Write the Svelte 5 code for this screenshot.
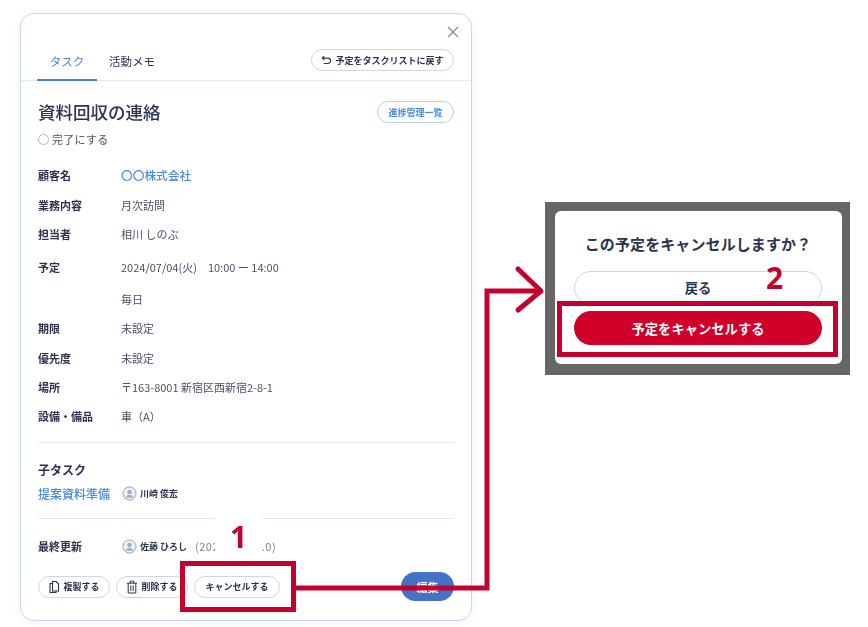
<script>
  const rows = [
    { label: '顧客名', value: '〇〇株式会社', link: true, h: 30 },
    { label: '業務内容', value: '月次訪問', h: 29 },
    { label: '担当者', value: '相川 しのぶ', h: 33 },
    { label: '予定', value: '2024/07/04(火)　10:00 ー 14:00', h: 32 },
    { label: '', value: '毎日', h: 29 },
    { label: '期限', value: '未設定', h: 30 },
    { label: '優先度', value: '未設定', h: 29 },
    { label: '場所', value: '〒163-8001 新宿区西新宿2-8-1', h: 29 },
    { label: '設備・備品', value: '車（A）', h: 29 }
  ];
</script>

{#snippet avatar()}
  <svg class="avatar" viewBox="0 0 16 16" width="15" height="15">
    <circle cx="8" cy="8" r="7" fill="#eef2f7" stroke="#8fa1b8" stroke-width="1" />
    <circle cx="8" cy="6.3" r="2.4" fill="#9fb0c6" />
    <path d="M3.8 12.6c.7-2.2 2.3-3.2 4.2-3.2s3.5 1 4.2 3.2" fill="#9fb0c6" />
  </svg>
{/snippet}

<main>
  <section class="card">
    <svg class="close" viewBox="0 0 12 12" width="12" height="12">
      <path d="M1 1l10 10M11 1L1 11" stroke="#8a8f96" stroke-width="1.4" fill="none" />
    </svg>

    <header class="tabs">
      <span class="tab active">タスク</span>
      <span class="tab">活動メモ</span>
      <button class="pill back">
        <svg viewBox="0 0 12 12" width="11" height="11">
          <path d="M3.6 1.2L1.3 3.4l2.3 2.2M1.6 3.4h5.9a2.9 2.9 0 0 1 0 5.900H3" stroke="#2b3350" stroke-width="1.2" fill="none" />
        </svg>
        予定をタスクリストに戻す
      </button>
    </header>

    <div class="body">
      <div class="title-row">
        <h1>資料回収の連絡</h1>
        <button class="pill progress">進捗管理一覧</button>
      </div>
      <div class="done"><span class="radio"></span>完了にする</div>

      <dl class="details">
        {#each rows as row}
          <div class="row" style="height:{row.h}px">
            <dt>{row.label}</dt>
            <dd class:link={row.link}>{row.value}</dd>
          </div>
        {/each}
      </dl>

      <hr />

      <h2>子タスク</h2>
      <div class="child">
        <span class="child-name">提案資料準備</span>
        {@render avatar()}
        <span class="person">川崎 俊宏</span>
      </div>

      <hr class="second" />

      <div class="updated">
        <span class="updated-label">最終更新</span>
        {@render avatar()}
        <span class="person">佐藤 ひろし</span>
        <span class="stamp">(2024/07/10.0)</span>
      </div>

      <footer class="actions">
        <button class="pill act">
          <svg viewBox="0 0 12 14" width="12" height="14">
            <path d="M4.500 1.500h3.600L10.500 4v7H4.500zM4.500 3.500H2v9h6V11" stroke="#2b3350" stroke-width="1.1" fill="none" />
          </svg>
          複製する
        </button>
        <button class="pill act">
          <svg viewBox="0 0 12 14" width="12" height="14">
            <path d="M1 3.200h10M4.200 3.200V1.200h3.600v2M2.200 3.200V13h7.600V3.200M4.800 5.500v5.500M7.200 5.500v5.500" stroke="#2b3350" stroke-width="1" fill="none" />
          </svg>
          削除する
        </button>
        <button class="pill act cancel">キャンセルする</button>
        <button class="edit">編集</button>
      </footer>
    </div>
  </section>

  <section class="dialog">
    <div class="sheet">
      <p>この予定をキャンセルしますか？</p>
      <button class="dlg-back">戻る</button>
      <button class="dlg-cancel">予定をキャンセルする</button>
    </div>
  </section>

  <!-- 注釈 -->
  <div class="patch"></div>
  <span class="num one">1</span>
  <span class="num two">2</span>
  <div class="box box-one"></div>
  <div class="box box-two"></div>
  <svg class="arrow" viewBox="0 0 868 627" width="868" height="627">
    <path d="M295 588H487V291H540" fill="none" stroke="#c4002f" stroke-width="5" />
    <path d="M518 269L541 291L518 310" fill="none" stroke="#c4002f" stroke-width="5" stroke-linecap="round" stroke-linejoin="round" />
  </svg>
</main>

<style>
  :global(body) {
    margin: 0;
    background: #fff;
    font-family: "Noto Sans CJK JP", "Noto Sans", sans-serif;
    color: #2b3350;
  }

  main {
    position: relative;
    width: 868px;
    height: 627px;
    overflow: hidden;
    display: flex;
    align-items: flex-start;
    filter: blur(0.35px);
  }

  button {
    font-family: inherit;
    cursor: pointer;
  }

  .card {
    position: relative;
    box-sizing: border-box;
    width: 452px;
    height: 608px;
    margin: 13px 0 0 20px;
    flex: none;
    background: #fff;
    border: 1px solid #c8d8ea;
    border-radius: 14px;
    box-shadow: 0 2px 8px rgba(60, 90, 130, 0.08);
  }

  .close {
    position: absolute;
    top: 12px;
    right: 12px;
  }

  .tabs {
    display: flex;
    align-items: flex-end;
    height: 66px;
    padding: 0 17px 0 16px;
    border-bottom: 1px solid #e4eaf1;
  }

  .tab {
    box-sizing: border-box;
    height: 38px;
    padding-top: 9px;
    font-size: 11.500px;
    line-height: 18px;
    text-align: center;
    margin-bottom: -1px;
  }

  .tab.active {
    width: 60px;
    color: #4a7fd0;
    border-bottom: 2px solid #4a7fd0;
    margin-right: 12px;
  }

  .pill {
    display: inline-flex;
    align-items: center;
    justify-content: center;
    gap: 3px;
    box-sizing: border-box;
    height: 22px;
    padding: 0;
    background: #fff;
    border: 1px solid #ccd8e6;
    border-radius: 11px;
    color: #2b3350;
    font-size: 9px;
    font-weight: 700;
    white-space: nowrap;
  }

  .back {
    width: 143px;
    margin: 0 0 9px auto;
  }

  .body {
    padding: 0 17px;
  }

  .title-row {
    display: flex;
    align-items: center;
    justify-content: space-between;
    height: 22px;
    margin-top: 20px;
  }

  h1 {
    margin: 0;
    font-size: 17.500px;
    font-weight: 500;
    line-height: 22px;
  }

  .progress {
    width: 77px;
    color: #4a8ae0;
    border-color: #b5d3f5;
    font-size: 9px;
  }

  .done {
    display: flex;
    align-items: center;
    gap: 3px;
    height: 18px;
    margin-top: 7px;
    font-size: 11px;
    letter-spacing: 0.3px;
    color: #4a5268;
  }

  .radio {
    box-sizing: border-box;
    width: 11px;
    height: 11px;
    border: 1.500px solid #a9bad0;
    border-radius: 50%;
  }

  .details {
    margin: 18px 0 0;
  }

  .row {
    display: grid;
    grid-template-columns: 83px 1fr;
    font-size: 11px;
    line-height: 18px;
  }

  dt {
    font-weight: 700;
    color: #2b3350;
  }

  dd {
    margin: 0;
    color: #4a5268;
  }

  dd.link {
    color: #4a8ae0;
    font-size: 11.700px;
    font-weight: 500;
  }

  hr {
    border: 0;
    border-top: 1px solid #e3e9f0;
    margin: 6px 0 0;
  }

  h2 {
    margin: 18px 0 0;
    font-size: 12px;
    line-height: 18px;
    font-weight: 700;
  }

  .child {
    display: flex;
    align-items: center;
    height: 18px;
    margin-top: 5px;
  }

  .child-name {
    width: 84px;
    color: #4a8ae0;
    font-size: 12px;
    font-weight: 500;
  }

  .person {
    margin-left: 3px;
    font-size: 9px;
    font-weight: 700;
  }

  .second {
    margin-top: 16px;
  }

  .updated {
    display: flex;
    align-items: center;
    height: 18px;
    margin-top: 18px;
  }

  .updated-label {
    width: 84px;
    font-size: 11px;
    font-weight: 700;
  }

  .stamp {
    margin-left: 8px;
    font-size: 11px;
    letter-spacing: 0.5px;
    color: #7a8296;
  }

  .actions {
    display: flex;
    align-items: center;
    gap: 6px;
    height: 29px;
    margin-top: 17px;
  }

  .act {
    width: 72px;
  }

  .cancel {
    width: 86px;
  }

  .edit {
    width: 53px;
    height: 29px;
    margin-left: auto;
    padding: 0;
    border: 0;
    border-radius: 15px;
    background: #4472c4;
    color: #fff;
    font-size: 11px;
    font-weight: 700;
  }

  .dialog {
    box-sizing: border-box;
    flex: none;
    width: 305px;
    height: 173px;
    margin: 202px 0 0 73px;
    padding: 9px 8px 11px 10px;
    background: #666;
  }

  .sheet {
    height: 153px;
    box-sizing: border-box;
    padding: 0 20px 0 19px;
    background: #fff;
    border-radius: 6px;
    text-align: center;
  }

  .sheet p {
    margin: 0;
    padding-top: 22px;
    height: 60px;
    box-sizing: border-box;
    font-size: 15px;
    line-height: 22px;
    letter-spacing: 0.1px;
    font-weight: 700;
    color: #2b3350;
  }

  .dlg-back,
  .dlg-cancel {
    display: block;
    width: 248px;
    height: 34px;
    padding: 0;
    border-radius: 17px;
    font-size: 13.300px;
    font-weight: 700;
  }

  .dlg-back {
    background: #fff;
    border: 1px solid #ccd8e6;
    color: #2b3350;
    padding-bottom: 2px;
  }

  .dlg-cancel {
    margin-top: 6px;
    border: 0;
    background: #d0002a;
    color: #fff;
  }

  .patch {
    position: absolute;
    left: 215px;
    top: 508px;
    width: 47px;
    height: 52px;
    background: #fff;
  }

  .num {
    position: absolute;
    font-family: "Open Sans", "Noto Sans", sans-serif;
    font-weight: 700;
    font-size: 30px;
    line-height: 30px;
    color: #c4002f;
  }

  .one {
    left: 230px;
    top: 522px;
  }

  .two {
    left: 766px;
    top: 263px;
  }

  .box {
    position: absolute;
    box-sizing: border-box;
    border: 5px solid #c4002f;
  }

  .box-one {
    left: 180px;
    top: 561px;
    width: 116px;
    height: 51px;
  }

  .box-two {
    left: 557px;
    top: 301px;
    width: 281px;
    height: 56px;
  }

  .arrow {
    position: absolute;
    left: 0;
    top: 0;
  }
</style>
